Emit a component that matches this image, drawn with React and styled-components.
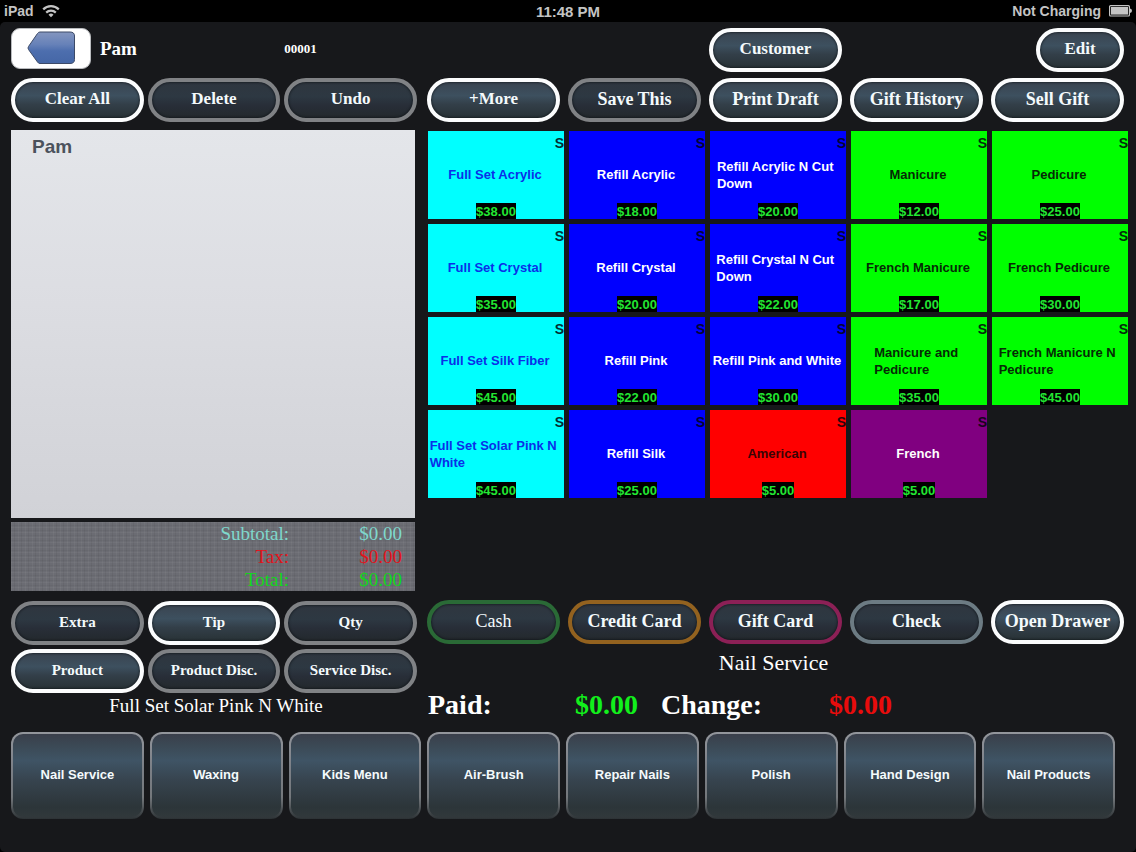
import React from "react"
import styled, { createGlobalStyle } from "styled-components"

const GlobalStyle = createGlobalStyle`
  * {
    box-sizing: border-box;
  }

  body {
    margin: 0;
    background: #000000;
  }

  button {
    margin: 0;
    cursor: pointer;
  }

  button:disabled {
    cursor: default;
  }
`

const sans = `"Liberation Sans", Arial, sans-serif`
const serif = `"Liberation Serif", "Times New Roman", serif`

const Screen = styled.div`
  display: flex;
  flex-direction: column;
  min-height: 100vh;
  color: #ffffff;
  font-family: ${serif};
`

const StatusBar = styled.header`
  display: grid;
  grid-template-columns: 1fr auto 1fr;
  align-items: center;
  height: 22px;
  padding: 0 4px;
  color: #c4c4c4;
  font: bold 14px ${sans};
`

const StatusGroup = styled.div`
  display: flex;
  align-items: center;
  gap: 8px;
  justify-content: ${({ $end }) => ($end ? "flex-end" : "flex-start")};
`

const Clock = styled.time`
  font-size: 15px;
`

const Register = styled.main`
  flex: 1;
  display: flex;
  flex-direction: column;
  padding: 6px 8px 33px 11px;
  border-radius: 5px;
  background: #17181b;
`

const Columns = styled.div`
  flex: 1;
  display: grid;
  grid-template-columns: 406fr 701fr;
  gap: 10px;
`

const Column = styled.section`
  display: flex;
  flex-direction: column;
  min-width: 0;
`

const TicketRow = styled.div`
  display: grid;
  grid-template-columns: repeat(3, 1fr);
  align-items: center;
  gap: 4px;
  min-height: 44px;
  margin-bottom: ${({ $gap }) => $gap}px;
`

const TicketHeader = styled(TicketRow)`
  padding-bottom: 3px;
`

const ToolRow = styled.div`
  display: grid;
  grid-template-columns: repeat(5, 1fr);
  gap: 8px;
  padding-right: 4px;
  margin-bottom: ${({ $gap }) => $gap}px;
`

const tones = {
  on: "#fbfcfd",
  off: "#808285",
  green: "#2a6a36",
  orange: "#93621f",
  pink: "#8c2056",
  slate: "#6c7b83",
}

const Pill = styled.button`
  grid-column: ${({ $column }) => $column || "auto"};
  justify-self: ${({ $width }) => ($width ? "end" : "stretch")};
  width: ${({ $width }) => $width || "100%"};
  height: 44px;
  padding: 0 0 2px;
  border: 4px solid ${({ $tone }) => tones[$tone]};
  border-radius: 22px;
  background: ${({ $tone }) =>
    $tone === "on"
      ? "linear-gradient(#3a4450, #3d505f 38%, #333f49 62%, #283236)"
      : "linear-gradient(#2f363f, #2d3842 40%, #282e38 65%, #23292d)"};
  box-shadow: inset 0 0 2px 1px rgba(10, 14, 18, 0.5);
  color: #f4fafc;
  font-family: ${serif};
  font-size: ${({ $size }) => $size}px;
  font-weight: ${({ $light }) => ($light ? "normal" : "bold")};
  white-space: nowrap;
`

const Customer = styled.div`
  grid-column: span 2;
  display: flex;
  align-items: center;
  gap: 9px;
`

const Back = styled.button`
  display: flex;
  width: 80px;
  height: 41px;
  padding: 2px 0 0 15px;
  border: 1px solid #b9bbbe;
  border-radius: 9px;
  background: #ffffff;
`

const CustomerName = styled.h1`
  margin: 0;
  font-size: 19px;
`

const TicketNumber = styled.span`
  font-size: 13px;
  font-weight: bold;
`

const Ticket = styled.div`
  flex: 1;
  margin-right: 2px;
  padding: 6px 21px;
  background: linear-gradient(#e4e6ea, #dcdde2 45%, #d1d2d7);
  color: #4b525c;
  font: bold 19px/22px ${sans};
`

const Totals = styled.dl`
  display: grid;
  grid-template-columns: 1fr 113px;
  margin: 4px 2px 10px 0;
  padding-right: 13px;
  background:
    repeating-linear-gradient(90deg, rgba(255, 255, 255, 0.04) 0 1px, transparent 1px 3px, rgba(0, 0, 0, 0.05) 3px 4px, transparent 4px 7px),
    repeating-linear-gradient(rgba(255, 255, 255, 0.04) 0 1px, transparent 1px 3px, rgba(0, 0, 0, 0.04) 3px 4px, transparent 4px 5px),
    #6b6c73;
  font-size: 19px;
  line-height: 23px;
  text-align: right;
`

const TotalLabel = styled.dt`
  color: ${({ $color }) => $color};
`

const TotalValue = styled.dd`
  margin: 0;
  color: ${({ $color }) => $color};
`

const LastItem = styled.p`
  margin: 0;
  height: 39px;
  padding-left: 4px;
  font-size: 19px;
  line-height: 26px;
  text-align: center;
`

const Services = styled.div`
  flex: 1;
  display: grid;
  grid-template-columns: repeat(5, 1fr);
  grid-auto-rows: 88px;
  gap: 5px;
  padding-left: 1px;
`

const ServiceTile = styled.button`
  display: grid;
  grid-template-rows: 24px 1fr 24px;
  justify-items: center;
  align-items: center;
  min-width: 0;
  padding: 0;
  border: 0;
  background: ${({ $bg }) => $bg};
  color: ${({ $fg }) => $fg};
  font: bold 13px/17px ${sans};
`

const Kind = styled.span`
  justify-self: end;
  color: #05050c;
  opacity: 0.85;
  font-size: 14px;
`

const ServiceName = styled.span`
  padding: 0 2px 1px 0;
  text-align: left;
  white-space: pre;
`

const Price = styled.span`
  align-self: end;
  padding-top: 1px;
  background: #000000;
  color: #22e632;
  line-height: 15px;
`

const Department = styled.h2`
  margin: 0;
  height: 39px;
  padding-right: 8px;
  font-size: 22px;
  font-weight: normal;
  line-height: 38px;
  text-align: center;
`

const Payment = styled.div`
  display: flex;
  gap: 23px;
  height: 49px;
  padding-left: 1px;
  font-size: 28px;
  font-weight: bold;
  line-height: 43px;
`

const Amount = styled.div`
  display: flex;
  justify-content: space-between;
  width: ${({ $width }) => $width};
`

const Money = styled.output`
  color: ${({ $color }) => $color};
`

const Categories = styled.nav`
  display: grid;
  grid-template-columns: repeat(8, 1fr);
  gap: 6px;
  padding-right: 13px;
`

const Category = styled.button`
  height: 87px;
  padding: 0 0 2px;
  border: 2px solid transparent;
  border-radius: 12px;
  background:
    linear-gradient(#3a3f4b, #3b4955 14%, #3f5465 32%, #37444f 55%, #2c3539 88%, #31383b) padding-box,
    linear-gradient(#93969c, #7c8087 40%, #74787c 75%, #2c3235) border-box;
  color: #f4fafc;
  font: bold 13px ${sans};
`

const services = [
  { name: "Full Set Acrylic", price: "38.00", bg: "#00ffff", fg: "#0b2fe8" },
  { name: "Refill Acrylic", price: "18.00", bg: "#0000ff", fg: "#ffffff" },
  { name: "Refill Acrylic N Cut \nDown", price: "20.00", bg: "#0000ff", fg: "#ffffff" },
  { name: "Manicure", price: "12.00", bg: "#00ff00", fg: "#062a06" },
  { name: "Pedicure", price: "25.00", bg: "#00ff00", fg: "#062a06" },
  { name: "Full Set Crystal", price: "35.00", bg: "#00ffff", fg: "#0b2fe8" },
  { name: "Refill Crystal", price: "20.00", bg: "#0000ff", fg: "#ffffff" },
  { name: "Refill Crystal N Cut \nDown", price: "22.00", bg: "#0000ff", fg: "#ffffff" },
  { name: "French Manicure", price: "17.00", bg: "#00ff00", fg: "#062a06" },
  { name: "French Pedicure", price: "30.00", bg: "#00ff00", fg: "#062a06" },
  { name: "Full Set Silk Fiber", price: "45.00", bg: "#00ffff", fg: "#0b2fe8" },
  { name: "Refill Pink", price: "22.00", bg: "#0000ff", fg: "#ffffff" },
  { name: "Refill Pink and White", price: "30.00", bg: "#0000ff", fg: "#ffffff" },
  { name: "Manicure and \nPedicure", price: "35.00", bg: "#00ff00", fg: "#062a06" },
  { name: "French Manicure N \nPedicure", price: "45.00", bg: "#00ff00", fg: "#062a06" },
  { name: "Full Set Solar Pink N \nWhite", price: "45.00", bg: "#00ffff", fg: "#0b2fe8" },
  { name: "Refill Silk", price: "25.00", bg: "#0000ff", fg: "#ffffff" },
  { name: "American", price: "5.00", bg: "#ff0000", fg: "#3a0404" },
  { name: "French", price: "5.00", bg: "#800080", fg: "#ffffff" },
]

const totals = [
  { label: "Subtotal:", color: "#7fd8cc" },
  { label: "Tax:", color: "#e0141c" },
  { label: "Total:", color: "#12d61c" },
]

const categories = [
  "Nail Service",
  "Waxing",
  "Kids Menu",
  "Air-Brush",
  "Repair Nails",
  "Polish",
  "Hand Design",
  "Nail Products",
]

const WifiIcon = () => (
  <svg width="18" height="14" viewBox="0 0 18 14" fill="none" stroke="#c4c4c4" strokeWidth="2.2">
    <path d="M1.2 5.4 A11 11 0 0 1 16.8 5.4" />
    <path d="M4.2 8.6 A6.8 6.8 0 0 1 13.8 8.6" />
    <path d="M9 13.2 L6.500 10.7 A3.6 3.6 0 0 1 11.500 10.7 Z" fill="#c4c4c4" stroke="none" />
  </svg>
)

const BatteryIcon = () => (
  <svg width="23" height="12" viewBox="0 0 23 12">
    <rect x="0.6" y="0.6" width="19.8" height="10.4" rx="1" fill="none" stroke="#c4c4c4" strokeWidth="1.2" />
    <rect x="2" y="2" width="17" height="7.6" fill="#c4c4c4" />
    <path d="M21 3.6 Q23 4 23 5.8 Q23 7.6 21 8 Z" fill="#c4c4c4" />
  </svg>
)

const BackIcon = () => (
  <svg width="49" height="34" viewBox="0 0 49 34">
    <defs>
      <linearGradient id="backFill" x1="0" y1="0" x2="0" y2="1">
        <stop offset="0" stopColor="#8496bf" />
        <stop offset="0.4" stopColor="#6681b8" />
        <stop offset="0.6" stopColor="#4d6eae" />
        <stop offset="1" stopColor="#4567a6" />
      </linearGradient>
    </defs>
    <path
      d="M13 1 H43 Q47.500 1 47.500 5 V28.500 Q47.500 32.500 43 32.500 H13 Q11.500 32.500 10.500 31 L1.500 18.500 Q0.500 17 1.500 15.500 L10.500 2.500 Q11.500 1 13 1 Z"
      fill="url(#backFill)"
      stroke="#3c4a68"
    />
  </svg>
)

const App = () => (
  <>
    <GlobalStyle />
    <Screen>
      <StatusBar>
        <StatusGroup>
          iPad <WifiIcon />
        </StatusGroup>
        <Clock>11:48 PM</Clock>
        <StatusGroup $end>
          Not Charging <BatteryIcon />
        </StatusGroup>
      </StatusBar>

      <Register>
        <Columns>
          <Column>
            <TicketHeader $gap={6}>
              <Customer>
                <Back aria-label="Back">
                  <BackIcon />
                </Back>
                <CustomerName>Pam</CustomerName>
              </Customer>
              <TicketNumber>00001</TicketNumber>
            </TicketHeader>
            <TicketRow $gap={8}>
              <Pill $tone="on" $size={17}>Clear All</Pill>
              <Pill $tone="off" $size={17} disabled>Delete</Pill>
              <Pill $tone="off" $size={17} disabled>Undo</Pill>
            </TicketRow>
            <Ticket>Pam</Ticket>
            <Totals>
              {totals.map(({ label, color }) => (
                <React.Fragment key={label}>
                  <TotalLabel $color={color}>{label}</TotalLabel>
                  <TotalValue $color={color}>$0.00</TotalValue>
                </React.Fragment>
              ))}
            </Totals>
            <TicketRow $gap={4}>
              <Pill $tone="off" $size={15} disabled>Extra</Pill>
              <Pill $tone="on" $size={15}>Tip</Pill>
              <Pill $tone="off" $size={15} disabled>Qty</Pill>
            </TicketRow>
            <TicketRow $gap={0}>
              <Pill $tone="on" $size={15}>Product</Pill>
              <Pill $tone="off" $size={15} disabled>Product Disc.</Pill>
              <Pill $tone="off" $size={15} disabled>Service Disc.</Pill>
            </TicketRow>
            <LastItem>Full Set Solar Pink N White</LastItem>
          </Column>

          <Column>
            <ToolRow $gap={6}>
              <Pill $tone="on" $size={17} $column={3}>Customer</Pill>
              <Pill $tone="on" $size={17} $column={5} $width="88px">Edit</Pill>
            </ToolRow>
            <ToolRow $gap={9}>
              <Pill $tone="on" $size={17}>+More</Pill>
              <Pill $tone="off" $size={18} disabled>Save This</Pill>
              <Pill $tone="on" $size={18}>Print Draft</Pill>
              <Pill $tone="on" $size={18}>Gift History</Pill>
              <Pill $tone="on" $size={18}>Sell Gift</Pill>
            </ToolRow>
            <Services>
              {services.map(({ name, price, bg, fg }) => (
                <ServiceTile key={name} $bg={bg} $fg={fg}>
                  <Kind>S</Kind>
                  <ServiceName>{name}</ServiceName>
                  <Price>${price}</Price>
                </ServiceTile>
              ))}
            </Services>
            <ToolRow $gap={0}>
              <Pill $tone="green" $size={18} $light>Cash</Pill>
              <Pill $tone="orange" $size={18}>Credit Card</Pill>
              <Pill $tone="pink" $size={18}>Gift Card</Pill>
              <Pill $tone="slate" $size={18}>Check</Pill>
              <Pill $tone="on" $size={18}>Open Drawer</Pill>
            </ToolRow>
            <Department>Nail Service</Department>
            <Payment>
              <Amount $width="30%">
                <span>Paid:</span>
                <Money $color="#12f01c">$0.00</Money>
              </Amount>
              <Amount $width="33%">
                <span>Change:</span>
                <Money $color="#e80c0c">$0.00</Money>
              </Amount>
            </Payment>
          </Column>
        </Columns>

        <Categories>
          {categories.map((name) => (
            <Category key={name}>{name}</Category>
          ))}
        </Categories>
      </Register>
    </Screen>
  </>
)

export default App
